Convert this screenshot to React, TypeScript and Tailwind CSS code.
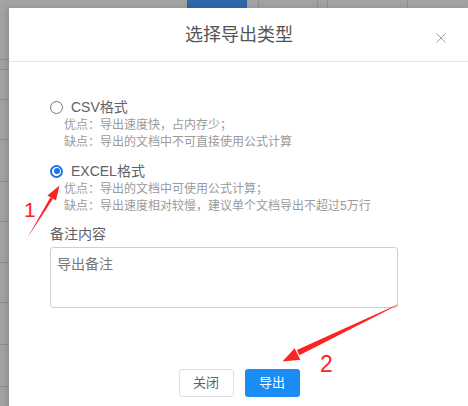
import React, { useState } from 'react';

type ExportType = 'csv' | 'excel';

const font = { fontFamily: '"Liberation Sans", "Noto Sans CJK SC", sans-serif' };

const options: { key: ExportType; label: string; pros: string; cons: string }[] = [
  {
    key: 'csv',
    label: 'CSV格式',
    pros: '优点：导出速度快，占内存少；',
    cons: '缺点：导出的文档中不可直接使用公式计算',
  },
  {
    key: 'excel',
    label: 'EXCEL格式',
    pros: '优点：导出的文档中可使用公式计算；',
    cons: '缺点：导出速度相对较慢，建议单个文档导出不超过5万行',
  },
];

const Radio: React.FC<{ checked: boolean }> = ({ checked }) =>
  checked ? (
    <span className="w-[13px] h-[13px] rounded-full border-2 border-[#1a73e8] flex items-center justify-center shrink-0">
      <span className="w-[6px] h-[6px] rounded-full bg-[#1a73e8]"></span>
    </span>
  ) : (
    <span className="w-[13px] h-[13px] rounded-full border border-[#767676] bg-white shrink-0"></span>
  );

const App: React.FC = () => {
  const [type, setType] = useState<ExportType>('excel');
  const [note, setNote] = useState('');

  return (
    <div className="relative w-[468px] h-[406px] overflow-hidden bg-[#a3a3a3]" style={font}>
      {/* page behind the overlay */}
      <div className="flex flex-col">
        <div className="h-[8px] relative">
          <div className="absolute left-[187px] bottom-0 w-[60px] h-[20px] bg-[#2e68ab]"></div>
          <div className="absolute left-[258px] bottom-0 w-[60px] h-[20px] border-x border-[#8f8f8f]"></div>
          <div className="absolute left-[327px] bottom-0 w-[81px] h-[20px] border-x border-[#8f8f8f]"></div>
        </div>
        <div className="h-[52px] border-b border-[#8d8d8d]"></div>
        <div className="h-[10px] border-b border-[#8d8d8d]"></div>
        <div className="h-[30px] border-b border-[#8d8d8d]"></div>
        <div className="h-[40px] border-b border-[#8d8d8d]"></div>
        <div className="h-[42px] border-b border-[#8d8d8d]"></div>
        <div className="h-[40px] border-b border-[#8d8d8d]"></div>
        <div className="h-[41px] border-b border-[#8d8d8d]"></div>
        <div className="h-[40px] border-b border-[#8d8d8d]"></div>
        <div className="h-[42px] border-b border-[#8d8d8d]"></div>
        <div className="h-[42px] border-b border-[#8d8d8d]"></div>
      </div>

      {/* dialog */}
      <div className="absolute left-[9px] top-[8px] w-[460px] h-[420px] bg-white shadow-[-2px_0_6px_rgba(0,0,0,0.15)] flex flex-col">
        <div className="relative h-[54px] border-b border-[#e5e5e5] flex items-center justify-center pt-[2px]">
          <span className="text-[18px] text-[#555]">选择导出类型</span>
          <button className="absolute right-[23px] top-[25px] w-[10px] h-[10px]">
            <svg width="10" height="10" viewBox="0 0 10 10" className="block">
              <path d="M0.5 0.5 L9.5 9.5 M9.5 0.5 L0.5 9.5" stroke="#a0a0a0" strokeWidth="1" />
            </svg>
          </button>
        </div>

        <div className="pl-[41px] pt-[35px]">
          {options.map((o, i) => (
            <div key={o.key} className={i > 0 ? 'mt-[10px]' : ''}>
              <label className="flex items-center h-[20px] cursor-pointer" onClick={() => setType(o.key)}>
                <Radio checked={type === o.key} />
                <span className="ml-[8px] text-[14px] text-[#606266]">{o.label}</span>
              </label>
              <div className="pl-[14px] text-[12px] leading-[17px] text-[#9a9a9a]">
                <div>{o.pros}</div>
                <div>{o.cons}</div>
              </div>
            </div>
          ))}

          <div className="mt-[9px] h-[20px] flex items-center text-[14px] text-[#606266]">备注内容</div>
          <textarea
            value={note}
            onChange={(e) => setNote(e.target.value)}
            placeholder="导出备注"
            className="mt-[3px] block w-[348px] h-[61px] resize-none border border-[#cfcfcf] rounded-[3px] px-[6px] py-[6px] text-[14px] leading-[20px] text-[#606266] placeholder:text-[#777] outline-none"
            style={font}
          />
        </div>

        <div className="mt-[61px] flex justify-center gap-[11px]">
          <button className="w-[55px] h-[28px] rounded-[3px] border border-[#dcdfe6] bg-white text-[13px] text-[#606266]">
            关闭
          </button>
          <button className="w-[55px] h-[28px] rounded-[3px] bg-[#1c8cf5] text-[13px] text-white">导出</button>
        </div>
      </div>

      {/* red annotations */}
      <svg className="absolute inset-0 pointer-events-none" width="468" height="406" viewBox="0 0 468 406">
        <polygon points="25.8,240.2 26.3,239.8 50.4,197.2 53.0,198.8" fill="#f22" />
        <polygon points="59.5,185.5 56.0,200.6 47.4,195.4" fill="#f22" />
        <polygon points="397.0,304.7 397.3,305.3 299.4,355.3 296.8,349.9" fill="#f22" />
        <polygon points="282.5,361.5 300.4,359.8 294.6,348.2" fill="#f22" />
      </svg>
      <div className="absolute left-[24px] top-[198px] text-[21px] leading-[24px] text-[#f22]" style={{ fontFamily: '"Liberation Sans", sans-serif' }}>
        1
      </div>
      <div className="absolute left-[320px] top-[351px] text-[23px] leading-[26px] text-[#f22]" style={{ fontFamily: '"Liberation Sans", sans-serif' }}>
        2
      </div>
    </div>
  );
};

export default App;
